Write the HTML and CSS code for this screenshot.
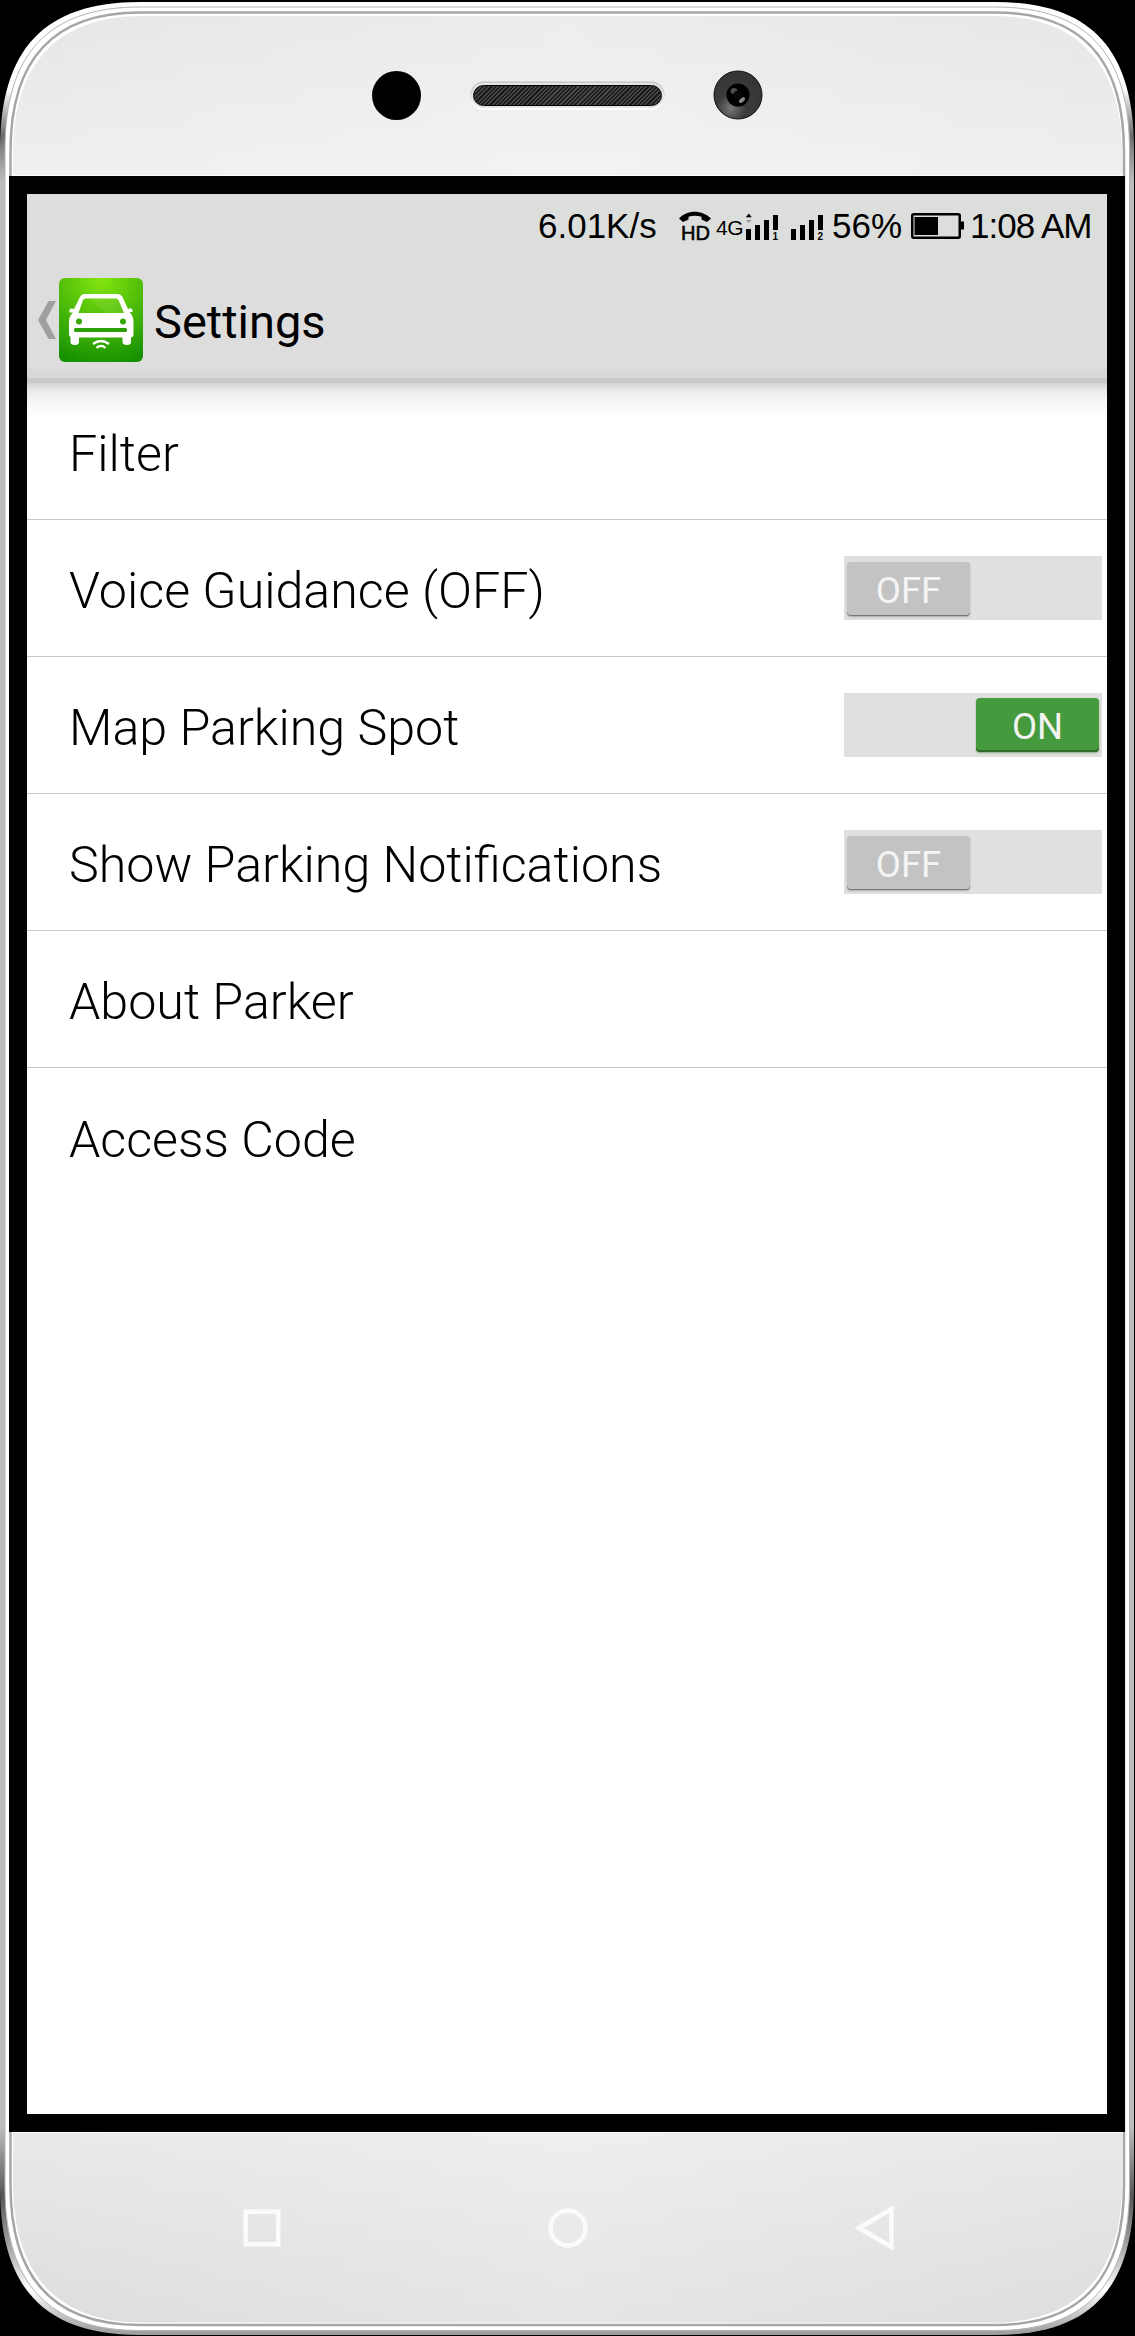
FILE: index.html
```html
<!DOCTYPE html>
<html lang="en">
<head>
<meta charset="utf-8">
<title>Settings</title>
<link rel="stylesheet" href="styles.css">
</head>
<body>
<div class="phone">
  <svg class="shell" viewBox="0 0 1135 2336" aria-hidden="true">
    <defs>
      <linearGradient id="edge" gradientUnits="userSpaceOnUse" x1="0" y1="0" x2="0" y2="2336">
        <stop offset="0" stop-color="#fff"/><stop offset=".038" stop-color="#fff"/>
        <stop offset=".058" stop-color="#6c6c6c"/><stop offset=".077" stop-color="#bcbcbc"/>
        <stop offset=".911" stop-color="#bcbcbc"/><stop offset=".94" stop-color="#555"/>
        <stop offset=".963" stop-color="#aaa"/><stop offset=".98" stop-color="#fff"/>
        <stop offset=".993" stop-color="#bbb"/><stop offset="1" stop-color="#999"/>
      </linearGradient>
      <linearGradient id="body" gradientUnits="userSpaceOnUse" x1="0" y1="0" x2="0" y2="2336">
        <stop offset="0" stop-color="#e6e6e6"/><stop offset=".075" stop-color="#efefef"/>
        <stop offset=".913" stop-color="#e9e9e9"/><stop offset="1" stop-color="#dcdcdc"/>
      </linearGradient>
      <linearGradient id="sheen" x1="0" x2="1" y1="0" y2="0">
        <stop offset="0" stop-color="#fff" stop-opacity="0"/>
        <stop offset=".5" stop-color="#fff" stop-opacity=".25"/>
        <stop offset="1" stop-color="#fff" stop-opacity="0"/>
      </linearGradient>
    </defs>
    <path fill="url(#edge)" d="M0 150C0 49 44 2 140 2H995C1091 2 1134 49 1134 150V2187C1134 2288 1091 2335 995 2335H140C44 2335 0 2288 0 2187Z"/>
    <path fill="#fff" stroke="#b4b4b4" stroke-width="1" d="M5 150C5 54 48 7 140 7H995C1087 7 1129.500 54 1129.500 150V2187C1129.500 2283 1087 2330.500 995 2330.500H140C48 2330.500 5 2283 5 2187Z"/>
    <path fill="#fff" stroke="#a6a6a6" stroke-width="2.500" d="M10.500 152C10.500 59 53 12.500 140 12.500H995C1082 12.500 1124 59 1124 152V2185C1124 2278 1082 2325 995 2325H140C53 2325 10.500 2278 10.500 2185Z"/>
    <path fill="url(#body)" d="M13 154C13 64 57 16 142 16H993C1078 16 1122 64 1122 154V2183C1122 2274 1078 2322.500 993 2322.500H142C57 2322.500 13 2274 13 2183Z"/>
    <path fill="url(#sheen)" d="M13 154C13 64 57 16 142 16H993C1078 16 1122 64 1122 154V2183C1122 2274 1078 2322.500 993 2322.500H142C57 2322.500 13 2274 13 2183Z"/>
    <path d="M12 175.500H1123M12 2132.500H1123" stroke="#fff" stroke-opacity=".8"/>
  </svg>

  <div class="forehead">
    <span class="sensor"></span>
    <span class="speaker"></span>
    <svg class="camera" width="50" height="50" viewBox="0 0 50 50">
      <defs>
        <radialGradient id="glass" cx=".35" cy=".78" r=".75"><stop offset="0" stop-color="#777"/><stop offset=".4" stop-color="#3c3c3c"/><stop offset="1" stop-color="#353535"/></radialGradient>
      </defs>
      <circle cx="25" cy="25" r="24" fill="url(#glass)" stroke="#111"/>
      <circle cx="25" cy="25" r="11.500" fill="#000"/>
      <ellipse cx="21" cy="21" rx="3.500" ry="3" fill="#4c4c4c"/>
      <ellipse cx="29" cy="30" rx="3.600" ry="2" transform="rotate(-45 29 30)" fill="#888"/>
      <circle cx="25" cy="25" r="4.500" fill="#090909"/>
    </svg>
  </div>

  <main class="screen">
    <div class="status">
      <span class="speed">6.01K/s</span>
      <svg class="hd" width="34" height="32" viewBox="0 0 34 32">
        <path d="M1 8.500C9-.5 24-.5 33 8.500L29 12L23.500 9.500V6.800Q17 4.800 10.500 6.800V9.500L5 12Z"/>
        <text x="3" y="30" font-size="19.500" textLength="29" lengthAdjust="spacingAndGlyphs">HD</text>
      </svg>
      <span class="net">4G</span>
      <svg class="signal first" width="34" height="32" viewBox="0 0 34 32">
        <path d="M1 19h5v11H1zM10 15h5v15h-5zM19 10h5v20h-5zM28 5h5v15h-5zM.8 7.300L3.800 3.500L6.800 7.300Z"/>
        <path class="dim" d="M.8 10L3.800 13L6.800 10Z"/>
        <text x="27.500" y="30" font-size="10">1</text>
      </svg>
      <svg class="signal second" width="34" height="32" viewBox="0 0 34 32">
        <path d="M1 19h5v11H1zM10 15h5v15h-5zM19 10h5v20h-5zM28 5h5v15h-5z"/>
        <text x="27.500" y="30" font-size="10">2</text>
      </svg>
      <span class="percent">56%</span>
      <svg class="battery" width="53" height="26" viewBox="0 0 53 26">
        <rect x="1.250" y="1.250" width="47.500" height="23.500" rx="1.500" fill="none" stroke="#000" stroke-width="2.500"/>
        <path d="M3.500 4h23.500v18H3.500zM50 8.500h3v8h-3z"/>
      </svg>
      <span class="clock">1:08 AM</span>
    </div>

    <header class="appbar">
      <svg class="back" width="18" height="38" viewBox="0 0 18 38"><path d="M10.500 0H18L8 19L18 38H10.500L0 19Z" fill="#a0a0a0"/></svg>
      <svg class="logo" width="84" height="84" viewBox="0 0 84 84">
        <defs>
          <radialGradient id="green" cx=".5" cy="0" r="1.050"><stop offset="0" stop-color="#85e60f"/><stop offset=".5" stop-color="#4dbb08"/><stop offset="1" stop-color="#159000"/></radialGradient>
        </defs>
        <rect width="84" height="84" rx="6" fill="url(#green)"/>
        <path fill="#fff" fill-rule="evenodd" d="M26 16H58Q62 16 63.500 19L69 31Q74 28.500 73.500 34H70.500Q74.500 38 74.500 44V57Q74.500 59 72 59.500V64Q72 67 68 67Q63.500 67 63.500 64V59.500H20V64Q20 67 16 67Q11.500 67 11.500 64V59Q10 58.500 10 56V44Q10 38 14 34.500H10.500Q9.500 29 15 31L21 19Q22.500 16 26 16ZM26.500 20.500Q24.800 20.500 24 22L19.500 35H65L59.500 22Q58.800 20.500 57 20.500Z"/>
        <path d="M31 21L48 35H65L59.500 22Q58.800 20.500 57 20.500Z" fill="#fff" opacity=".08"/>
        <circle cx="20" cy="43.500" r="3" fill="#35a804"/><circle cx="64" cy="43.500" r="3" fill="#35a804"/>
        <rect x="15" y="50" width="53" height="4" rx="1.500" fill="#2ca003"/>
        <path d="M34 66Q42 60 50 66M37.500 69.800Q42 66 46.500 69.800" fill="none" stroke="#fff" stroke-width="2.200"/>
      </svg>
      <h1>Settings</h1>
    </header>

    <ul class="list">
      <li><span>Filter</span></li>
      <li><span>Voice Guidance (OFF)</span><div class="toggle"><b>OFF</b></div></li>
      <li><span>Map Parking Spot</span><div class="toggle on"><b>ON</b></div></li>
      <li><span>Show Parking Notifications</span><div class="toggle"><b>OFF</b></div></li>
      <li><span>About Parker</span></li>
      <li><span>Access Code</span></li>
    </ul>
  </main>

  <nav class="keys">
    <svg width="40" height="50" viewBox="0 0 40 50"><rect x="3.700" y="8.700" width="32.500" height="32.500"/></svg>
    <svg width="40" height="50" viewBox="0 0 40 50"><circle cx="20" cy="25" r="17.500"/></svg>
    <svg width="40" height="50" viewBox="0 0 40 50"><path d="M4.800 25L37.500 6.200V43.800Z"/></svg>
  </nav>
</div>
</body>
</html>
```
FILE: styles.css
```css
* { box-sizing: border-box; }
body { margin: 0; background: #000; font-family: Roboto, sans-serif; color: #000; }
svg { display: block; flex: none; }

.phone {
  position: relative;
  isolation: isolate;
  width: 1135px;
  height: 2336px;
  display: flex;
  flex-direction: column;
}
.shell { position: absolute; inset: 0; width: 1135px; height: 2336px; z-index: -1; }

.forehead { height: 176px; display: flex; align-items: center; padding: 14px 0 0 371.500px; }
.sensor { width: 49px; height: 49px; border-radius: 50%; background: #000; }
.speaker {
  width: 189px;
  height: 21px;
  margin: 0 51px 0 52.500px;
  border: 1.500px solid #000;
  border-radius: 11px;
  background: repeating-linear-gradient(135deg, #1a1a1a 0 1.500px, #484848 1.500px 3px);
  box-shadow: 0 0 0 2px #e4e4e4, 0 -1px 0 2.500px #c6c6c6, 0 2px 0 2px #fff;
}

.screen {
  width: 1116px;
  height: 1956px;
  margin-left: 9px;
  border: 18px solid #000;
  background: #fff;
  flex: none;
}

.status {
  height: 66px;
  display: flex;
  align-items: center;
  background: #dcdedb;
  font: 35px/40px "Liberation Sans", sans-serif;
  white-space: nowrap;
}
.status span { flex: none; margin-top: -2px; }
.status svg { fill: #000; overflow: visible; }
.status .dim { fill: #999; }
.status .speed { width: 119px; margin-left: 511px; }
.status .hd { margin: -2px 0 0 21px; }
.hd text { stroke: #000; stroke-width: .5px; }
.status .net { width: 29px; margin: 0 0 -1px 4px; font-size: 21px; letter-spacing: -.5px; }
.signal { margin-top: -2px; }
.signal text { font-weight: 700; }
.second { margin-left: 11px; }
.status .percent { width: 73px; margin-left: 8px; }
.battery { margin: -3px 0 0 6px; }
.status .clock { margin-left: 6px; letter-spacing: -1px; }

.appbar {
  height: 123px;
  display: flex;
  align-items: center;
  padding: 0 0 3px 11px;
  background: linear-gradient(#dddddd 0 109px, #d8d8d8 109px 118px, #c9c9c9 118px);
}
.logo { margin-left: 3px; }
.appbar h1 { margin: 4px 0 0 11px; font-size: 47px; font-weight: 400; line-height: 56px; }

.list {
  margin: 0;
  padding: 0;
  list-style: none;
  background: linear-gradient(#d4d4d4, #ececec 9px, #f7f7f7 20px, #fff 35px);
}
.list li {
  height: 137px;
  display: flex;
  align-items: center;
  justify-content: space-between;
  padding: 0 5px 0 42px;
  border-bottom: 1px solid #c8c8c8;
  font-size: 50.200px;
  font-weight: 300;
}
.list li:last-child { border-bottom: 0; }
.list span { padding-top: 5px; white-space: nowrap; }

.toggle { width: 258px; height: 64px; padding: 6px 3px 4px; display: flex; background: #e0e0e0; }
.toggle b {
  width: 123px;
  height: 54px;
  border-radius: 4px;
  background: #c3c3c3;
  box-shadow: inset 0 -1px 0 #777, 0 1px 2px #aaa;
  color: #f4f4f4;
  font-size: 36.500px;
  font-weight: 400;
  line-height: 57px;
  text-align: center;
}
.toggle.on { justify-content: flex-end; padding-top: 5px; }
.toggle.on b { background: #459a3d; box-shadow: inset 0 -2px 0 #2f6b2a, 0 1px 2px #8a8; }

.keys { flex: 1; display: flex; justify-content: center; gap: 266px; padding: 71px 0 0 0; }
.keys svg { fill: none; stroke: #fbfbfb; stroke-width: 4.500; }
```
